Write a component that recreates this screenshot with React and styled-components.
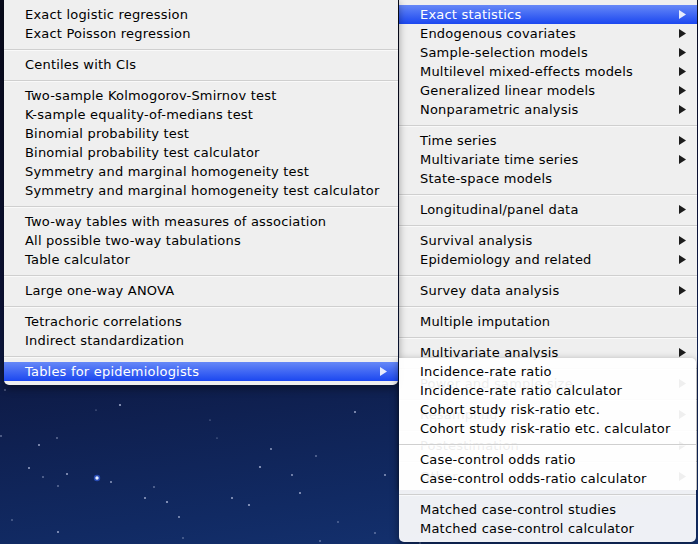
import React from "react";
import styled, { createGlobalStyle } from "styled-components";

const GlobalStyle = createGlobalStyle`
  html, body {
    margin: 0;
    padding: 0;
    width: 698px;
    height: 544px;
    overflow: hidden;
    background: #0b0e24;
  }
`;

const leftGroups = [
  ["Exact logistic regression", "Exact Poisson regression"],
  ["Centiles with CIs"],
  [
    "Two-sample Kolmogorov-Smirnov test",
    "K-sample equality-of-medians test",
    "Binomial probability test",
    "Binomial probability test calculator",
    "Symmetry and marginal homogeneity test",
    "Symmetry and marginal homogeneity test calculator",
  ],
  [
    "Two-way tables with measures of association",
    "All possible two-way tabulations",
    "Table calculator",
  ],
  ["Large one-way ANOVA"],
  ["Tetrachoric correlations", "Indirect standardization"],
  [{ label: "Tables for epidemiologists", sub: true, active: true }],
];

const rightGroups = [
  [
    { label: "Exact statistics", sub: true, active: true },
    { label: "Endogenous covariates", sub: true },
    { label: "Sample-selection models", sub: true },
    { label: "Multilevel mixed-effects models", sub: true },
    { label: "Generalized linear models", sub: true },
    { label: "Nonparametric analysis", sub: true },
  ],
  [
    { label: "Time series", sub: true },
    { label: "Multivariate time series", sub: true },
    "State-space models",
  ],
  [{ label: "Longitudinal/panel data", sub: true }],
  [
    { label: "Survival analysis", sub: true },
    { label: "Epidemiology and related", sub: true },
  ],
  [{ label: "Survey data analysis", sub: true }],
  ["Multiple imputation"],
  [{ label: "Multivariate analysis", sub: true }],
  [{ label: "Power and sample size", sub: true }],
  [{ label: "Resampling", sub: true }],
  [{ label: "Postestimation", sub: true }],
  [{ label: "Other", sub: true }],
];

const epiGroups = [
  [
    "Incidence-rate ratio",
    "Incidence-rate ratio calculator",
    "Cohort study risk-ratio etc.",
    "Cohort study risk-ratio etc. calculator",
  ],
  ["Case-control odds ratio", "Case-control odds-ratio calculator"],
  ["Matched case-control studies", "Matched case-control calculator"],
];

const stars = [
  [120, 405, 1.1], [355, 412, 1], [57, 438, 0.8], [39, 445, 1], [29, 468, 1],
  [67, 474, 1], [111, 482, 0.9], [58, 486, 0.8], [154, 487, 0.8],
  [145, 498, 1], [167, 502, 1.1], [179, 517, 0.9], [271, 449, 0.9],
  [260, 467, 1.1], [292, 475, 0.9], [300, 493, 1], [316, 456, 0.8],
  [232, 498, 1], [249, 505, 1.1], [385, 475, 0.9], [58, 532, 1],
  [320, 541, 0.8], [43, 477, 0.8], [1, 436, 0.8], [5, 390, 0.7],
  [217, 438, 0.6], [338, 522, 0.7], [375, 533, 0.8], [12, 520, 0.7],
  [96, 410, 0.6], [210, 420, 0.6], [183, 538, 0.7], [420, 543, 0.7],
];

function Arrow() {
  return (
    <ArrowIcon viewBox="0 0 7 9" width="7" height="9">
      <polygon points="0,0 7,4.5 0,9" />
    </ArrowIcon>
  );
}

function Menu({ groups, ...rest }) {
  return (
    <MenuPanel {...rest}>
      {groups.map((group, gi) => (
        <React.Fragment key={gi}>
          {gi > 0 && <Separator />}
          {group.map((entry) => {
            const item = typeof entry === "string" ? { label: entry } : entry;
            return (
              <Item key={item.label} $active={item.active}>
                <span>{item.label}</span>
                {item.sub && <Arrow />}
              </Item>
            );
          })}
        </React.Fragment>
      ))}
    </MenuPanel>
  );
}

function App() {
  return (
    <Desktop>
      <GlobalStyle />
      <Stars viewBox="0 0 698 544" width="698" height="544">
        <circle cx="97" cy="478" r="3.2" fill="#3d6cff" opacity="0.55" />
        <circle cx="97" cy="478" r="1.7" fill="#e8f0ff" />
        {stars.map(([x, y, r], i) => (
          <circle key={i} cx={x} cy={y} r={r} fill="#c9d2ee" opacity="0.75" />
        ))}
      </Stars>
      <Menu groups={leftGroups} $left={4} $top={0} $width={394} $pad={5} $shape="left" />
      <Menu groups={rightGroups} $left={399} $top={0} $width={298} $pad={5} $shape="right" />
      <Menu groups={epiGroups} $left={399} $top={358} $width={297} $pad={4} $shape="sub" />
    </Desktop>
  );
}

const Desktop = styled.div`
  position: relative;
  width: 698px;
  height: 544px;
  overflow: hidden;
  background: linear-gradient(172deg, #090b1c 0%, #0c1236 45%, #112a63 85%, #153474 100%);
  font-family: "DejaVu Sans", "Liberation Sans", sans-serif;
`;

const Stars = styled.svg`
  position: absolute;
  inset: 0;
`;

const radii = {
  left: "0 0 5px 5px",
  right: "0",
  sub: "0 5px 5px 5px",
};

const MenuPanel = styled.div`
  position: absolute;
  left: ${(p) => p.$left}px;
  top: ${(p) => p.$top}px;
  width: ${(p) => p.$width}px;
  box-sizing: border-box;
  padding: ${(p) => p.$pad}px 0 4px;
  display: flex;
  flex-direction: column;
  border-radius: ${(p) => radii[p.$shape]};
  background: ${(p) =>
    p.$shape === "sub" ? "rgba(255, 255, 255, 0.93)" : "#efefef"};
  box-shadow: ${(p) =>
    p.$shape === "right"
      ? "-1px 0 3px rgba(0, 0, 0, 0.35)"
      : "0 3px 8px rgba(0, 0, 0, 0.45)"};
  z-index: ${(p) => (p.$shape === "sub" ? 3 : p.$shape === "right" ? 1 : 2)};
`;

const Item = styled.div`
  height: 19px;
  display: flex;
  align-items: center;
  justify-content: space-between;
  padding: 0 11px 0 21px;
  font-size: 13px;
  letter-spacing: 0.2px;
  white-space: nowrap;
  color: ${(p) => (p.$active ? "#ffffff" : "#000000")};
  background: ${(p) =>
    p.$active ? "linear-gradient(#6688f7, #1b47f0)" : "transparent"};
`;

const ArrowIcon = styled.svg`
  flex: none;
  fill: currentColor;
  opacity: 0.88;
`;

const Separator = styled.div`
  height: 12px;
  display: flex;
  align-items: center;

  &::after {
    content: "";
    flex: 1;
    height: 1px;
    background: #cfcfcf;
    box-shadow: 0 1px 0 rgba(255, 255, 255, 0.6);
  }
`;

export default App;
